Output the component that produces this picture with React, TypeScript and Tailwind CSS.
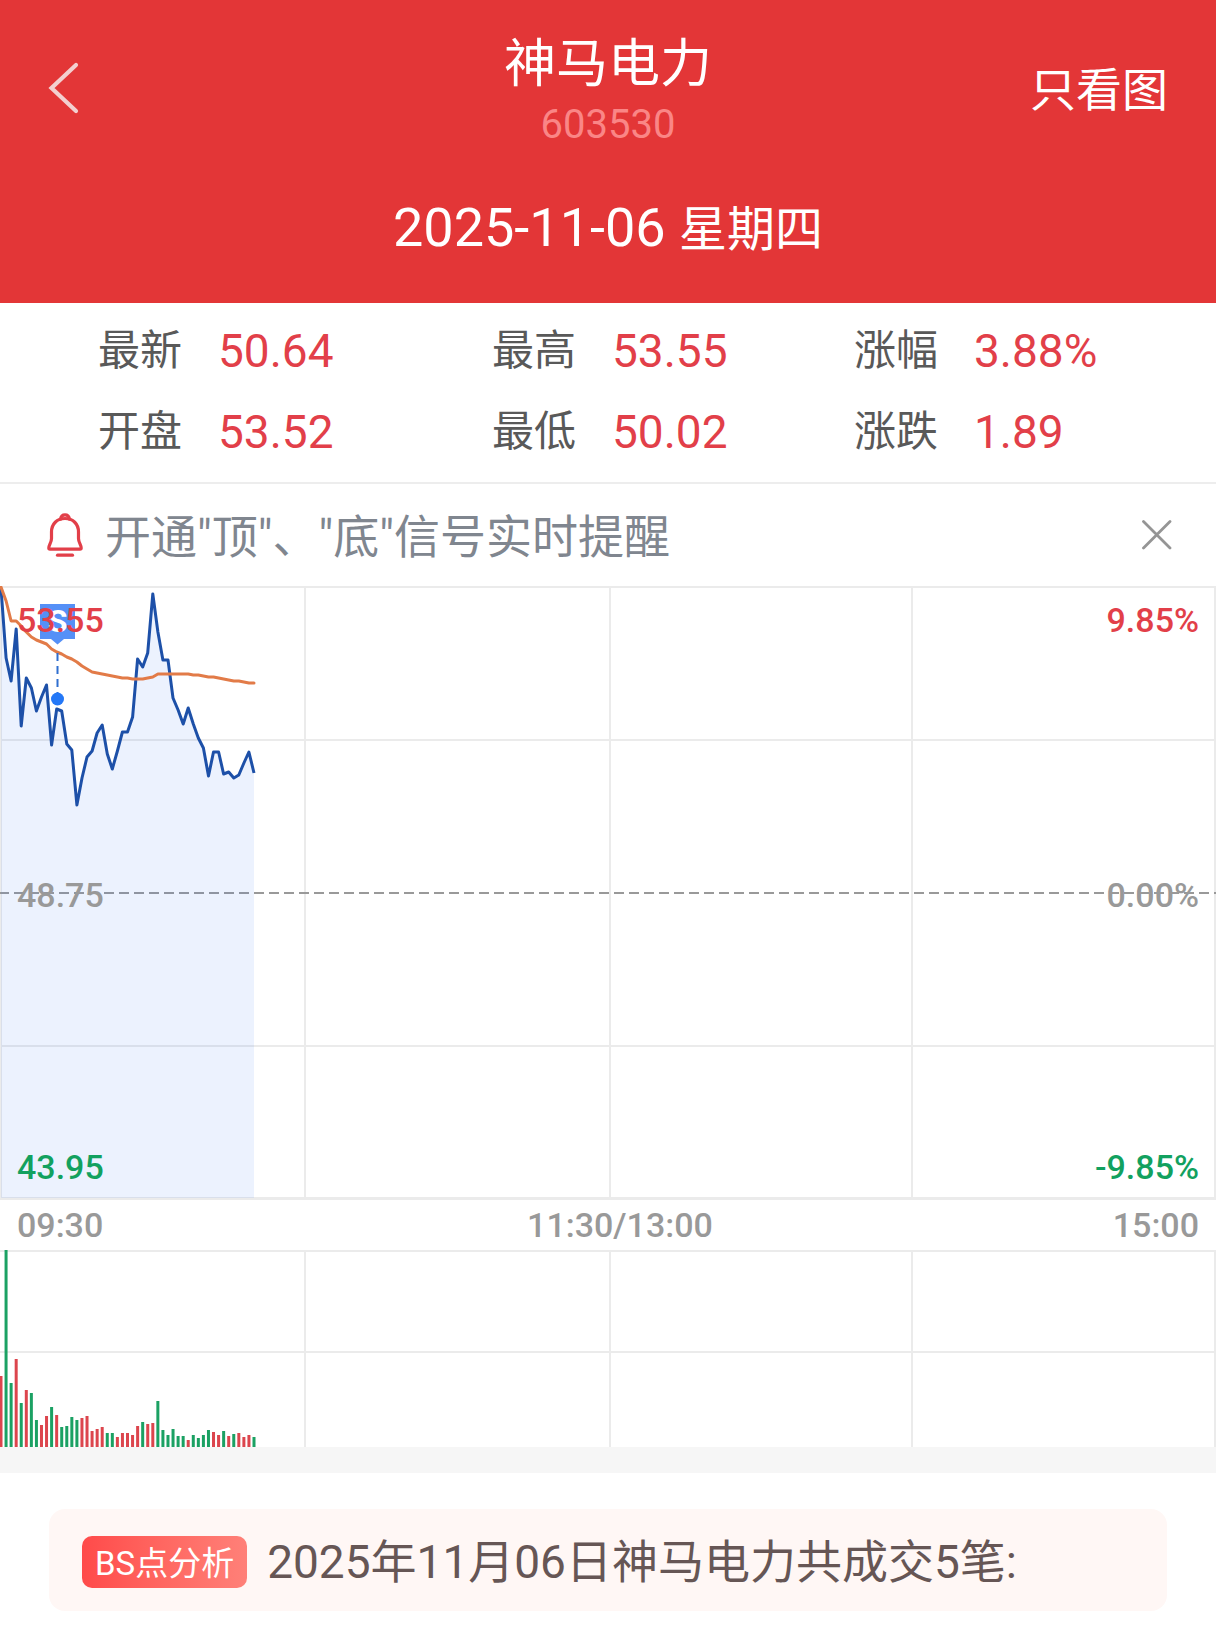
import { useState } from 'react';

interface Quote {
  label: string;
  value: string;
}

interface Volume {
  size: number;
  up: boolean;
}

const QUOTES: Quote[] = [
  { label: '最新', value: '50.64' },
  { label: '最高', value: '53.55' },
  { label: '涨幅', value: '3.88%' },
  { label: '开盘', value: '53.52' },
  { label: '最低', value: '50.02' },
  { label: '涨跌', value: '1.89' },
];

// One sample per minute, as distance from the top of the price pane
const PRICE = [
  2, 72, 95, 43, 140, 92, 102, 125, 111, 99, 159, 123, 125, 158, 164, 219, 192, 171, 165, 147, 139,
  168, 183, 165, 146, 146, 131, 73, 81, 67, 8, 46, 74, 74, 112, 124, 138, 122, 138, 152, 162, 190,
  166, 166, 188, 186, 192, 189, 177, 166, 187,
];

const AVERAGE = [
  1, 15, 35, 35, 40, 46, 51, 54, 56, 58, 63, 66, 68, 71, 73, 76, 80, 83, 86, 87, 88, 89, 90, 91, 92,
  92, 93, 93, 93, 92, 91, 88, 88, 88, 88, 88, 88, 88, 89, 89, 90, 91, 91, 92, 93, 94, 95, 95, 96, 97,
  97,
];

const VOLUME_SIZES = [
  71, 197, 64, 88, 44, 57, 54, 27, 22, 31, 40, 32, 20, 21, 30, 27, 29, 31, 16, 18, 20, 14, 14, 10,
  14, 14, 12, 21, 25, 23, 24, 46, 17, 12, 18, 11, 11, 7, 12, 9, 12, 17, 15, 12, 16, 11, 13, 14, 10,
  12, 10,
];
const VOLUME_SIDES = 'rggrgrggrrgrggggrrrrrggrrrrrgrrggggggrggggrrgrgrrrg';

const VOLUMES: Volume[] = VOLUME_SIZES.map((size, i) => ({
  size,
  up: VOLUME_SIDES[i] === 'r',
}));

const STEP = 5.06;
const GRID_X = [1, 305, 610, 912, 1215];

const toX = (i: number) => 1 + i * STEP;
const toPoints = (values: number[]) => values.map((y, i) => `${toX(i).toFixed(1)},${y}`).join(' ');

function BellIcon() {
  return (
    <svg
      viewBox="0 0 36 44"
      className="h-11 w-9 shrink-0"
      fill="none"
      stroke="#e23f49"
      strokeWidth="3.2"
      strokeLinecap="round"
      strokeLinejoin="round"
      aria-hidden="true"
    >
      <path d="M18 5.500C10 5.500 4.500 11 4.500 19v6.500C4.500 29.500 1.800 32 1.800 35q0 1.200 1.200 1.200h30q1.200 0 1.200-1.200c0-3-2.700-5.500-2.700-9.500V19C31.500 11 26 5.500 18 5.500Z" />
      <path d="M13.500 6.200C14 3 16 1.800 18 1.800s4 1.200 4.500 4.400" />
      <path d="M10.500 42.200h15" />
    </svg>
  );
}

function Header() {
  return (
    <header className="bg-[#e33637] px-12 pt-[31px] pb-[43px] text-white">
      <div className="grid grid-cols-[1fr_auto_1fr] items-center">
        <button type="button" aria-label="返回" className="justify-self-start">
          <svg
            viewBox="0 0 32 52"
            className="h-[52px] w-8"
            fill="none"
            stroke="#f3cfcf"
            strokeWidth="4.2"
            strokeLinecap="round"
            aria-hidden="true"
          >
            <path d="M28 3 3.500 26 28 49" />
          </svg>
        </button>
        <div className="text-center">
          <h1 className="text-[52px] leading-[67px]">神马电力</h1>
          <p className="mt-2 text-[40px] leading-[38px] text-[#fa8686]">603530</p>
        </div>
        <button type="button" className="justify-self-end pt-1 text-[46px] leading-[60px]">
          只看图
        </button>
      </div>
      <p className="mt-[54px] text-center text-[48px] leading-[60px]">
        <span className="text-[54px]">2025-11-06 </span>星期四
      </p>
    </header>
  );
}

function PriceChart() {
  const points = toPoints(PRICE);
  const lastX = toX(PRICE.length - 1);

  return (
    <div className="relative text-[34px] leading-10 font-medium">
      <svg
        viewBox="0 0 1216 614"
        preserveAspectRatio="none"
        className="block h-[614px] w-full"
        role="img"
        aria-label="分时走势"
      >
        <g stroke="#ebebeb" strokeWidth="2">
          {GRID_X.map((x) => (
            <path key={x} d={`M${x} 0V614`} />
          ))}
          <path d="M0 1H1216M0 154H1216M0 460H1216" />
          <path d="M0 612.500H1216" strokeWidth="3" />
        </g>
        <path d="M0 307H1216" stroke="#999" strokeWidth="2" strokeDasharray="10 5" strokeDashoffset="1" />
        <polygon points={`1,612 ${points} ${lastX},612`} fill="#2a6df5" fillOpacity="0.09" />
        <polyline points={points} fill="none" stroke="#1d50a8" strokeWidth="3" strokeLinejoin="round" />
        <polyline
          points={toPoints(AVERAGE)}
          fill="none"
          stroke="#e27b48"
          strokeWidth="3"
          strokeLinecap="round"
          strokeLinejoin="round"
        />
        {/* Sell marker */}
        <path d="M57.500 67V108" stroke="#2f6fd0" strokeWidth="2" strokeDasharray="8 5" />
        <circle cx="57.500" cy="113" r="6.500" fill="#2478f7" />
        <path d="M40 18H75V53H64L57.500 58.500 51 53H40Z" fill="#5590f7" />
        <text x="57.500" y="46" textAnchor="middle" fontSize="32" fontWeight="700" fill="#fff">
          S
        </text>
      </svg>
      <span className="absolute top-[14px] left-[17px] text-[#e23f49]">53.55</span>
      <span className="absolute top-[14px] right-[17px] text-[#e23f49]">9.85%</span>
      <span className="absolute top-[289px] left-[17px] text-[#999]">48.75</span>
      <span className="absolute top-[289px] right-[17px] text-[#999]">0.00%</span>
      <span className="absolute bottom-[13px] left-[17px] text-[#12a15f]">43.95</span>
      <span className="absolute right-[17px] bottom-[13px] text-[#12a15f]">-9.85%</span>
    </div>
  );
}

function VolumeChart() {
  return (
    <svg
      viewBox="0 0 1216 197"
      preserveAspectRatio="none"
      className="block h-[197px] w-full"
      role="img"
      aria-label="成交量"
    >
      <g stroke="#ebebeb" strokeWidth="2">
        {GRID_X.slice(1).map((x) => (
          <path key={x} d={`M${x} 0V197`} />
        ))}
        <path d="M0 1H1216M0 102H1216" />
      </g>
      {VOLUMES.map((v, i) => (
        <rect
          key={i}
          x={toX(i) - 1.5}
          y={197 - v.size}
          width="3"
          height={v.size}
          fill={v.up ? '#dc454d' : '#1ba163'}
        />
      ))}
    </svg>
  );
}

export default function App() {
  const [showTip, setShowTip] = useState(true);

  return (
    <div className="min-h-screen bg-white font-[Roboto,'Noto_Sans_CJK_SC',sans-serif]">
      <Header />

      {/* Quote summary */}
      <dl className="grid grid-cols-[394fr_362fr_362fr] gap-y-[21px] border-b-2 border-[#ededed] pt-[18px] pb-5 pl-[98px]">
        {QUOTES.map((q) => (
          <div key={q.label} className="flex items-center gap-9 leading-[60px]">
            <dt className="text-[42px] text-[#595959]">{q.label}</dt>
            <dd className="text-[46px] text-[#e23f49]">{q.value}</dd>
          </div>
        ))}
      </dl>

      {/* Signal reminder */}
      {showTip && (
        <div className="flex h-[102px] items-center pr-11 pl-[47px]">
          <BellIcon />
          <p className="ml-[22px] flex-1 pt-1 text-[46px] leading-[60px] text-[#80868f]">
            开通"顶"、"底"信号实时提醒
          </p>
          <button type="button" aria-label="关闭" onClick={() => setShowTip(false)}>
            <svg
              viewBox="0 0 30 30"
              className="h-[30px] w-[30px]"
              stroke="#959595"
              strokeWidth="2.800"
              strokeLinecap="round"
              aria-hidden="true"
            >
              <path d="M1.500 1.500 28 28M28 1.500 1.500 28" />
            </svg>
          </button>
        </div>
      )}

      <PriceChart />
      <div className="grid grid-cols-[1fr_auto_1fr] items-center px-[17px] text-[34px] leading-[50px] font-medium text-[#999]">
        <span>09:30</span>
        <span className="pl-6">11:30/13:00</span>
        <span className="text-right">15:00</span>
      </div>
      <VolumeChart />

      {/* Trade analysis */}
      <section className="border-t-[26px] border-[#f6f6f6] px-[49px] pt-9 pb-6">
        <div className="flex items-center gap-5 rounded-2xl bg-[#fff7f5] px-[33px] pt-[23px] pb-[19px]">
          <span className="rounded-[10px] bg-linear-to-r from-[#ff4a4a] to-[#ff8078] px-[13px] pt-1 text-[33px] leading-[48px] text-white">
            BS点分析
          </span>
          <p className="text-[46px] leading-[60px] text-[#665655]">2025年11月06日神马电力共成交5笔:</p>
        </div>
      </section>
    </div>
  );
}
